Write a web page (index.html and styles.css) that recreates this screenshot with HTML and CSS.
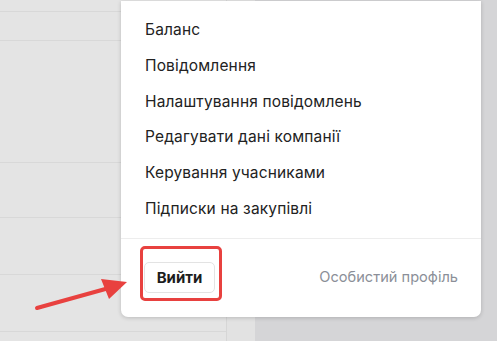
FILE: index.html
```html
<!DOCTYPE html>
<html lang="uk">
<head>
    <meta charset="UTF-8">
    <meta name="viewport" content="width=device-width, initial-scale=1.0">
    <title>Меню профілю</title>
    <link rel="stylesheet" href="styles.css">
</head>
<body>

    <!-- фон сторінки під меню -->
    <div class="page">
        <div class="list">
            <div class="row row-short"></div>
            <div class="row row-mid"></div>
            <div class="row row-tall"></div>
            <div class="row row-mid2"></div>
            <div class="row row-low"></div>
            <div class="row"></div>
        </div>
        <div class="gap"></div>
        <div class="side"></div>
    </div>

    <!-- випадаюче меню -->
    <div class="menu">
        <ul class="menu-list">
            <li>Баланс</li>
            <li>Повідомлення</li>
            <li>Налаштування повідомлень</li>
            <li>Редагувати дані компанії</li>
            <li>Керування учасниками</li>
            <li>Підписки на закупівлі</li>
        </ul>
        <div class="menu-footer">
            <button class="logout">Вийти</button>
            <a class="profile-link">Особистий профіль</a>
        </div>
    </div>

    <!-- позначка -->
    <div class="highlight"></div>
    <svg class="arrow" width="100" height="40" viewBox="0 0 100 40">
        <line x1="4" y1="33" x2="76" y2="13" stroke="#e8413f" stroke-width="4" stroke-linecap="round"/>
        <polygon points="94,7 68,4 76,24" fill="#e8413f"/>
    </svg>

</body>
</html>
```

FILE: styles.css
```css
body {
    margin: 0;
    width: 497px;
    height: 341px;
    overflow: hidden;
    position: relative;
    font-family: Inter, "Noto Sans", sans-serif;
    background: #d5d5d7;
}

/* фон */
.page {
    display: flex;
    height: 341px;
}

.list {
    width: 226px;
    border-right: 1px solid #d6d6d6;
    background: #e4e4e4;
    display: flex;
    flex-direction: column;
}

.row {
    border-bottom: 1px solid #d8d8d8;
    flex: none;
    height: 56px;
}

.row-short { height: 11px; }
.row-mid { height: 28px; }
.row-tall { height: 121px; }
.row-mid2 { height: 54px; }
.row-low { height: 56px; }

.gap {
    width: 28px;
    background: #e2e2e2;
}

.side {
    flex: 1;
    background: #d5d5d7;
}

/* меню */
.menu {
    position: absolute;
    left: 121px;
    top: 1px;
    width: 360px;
    height: 316px;
    background: #fff;
    border-radius: 0 0 7px 7px;
    box-shadow: 0 1px 4px rgba(0, 0, 0, 0.18);
    display: flex;
    flex-direction: column;
}

.menu-list {
    list-style: none;
    margin: 0;
    padding: 11px 0 11px 24px;
    border-bottom: 1px solid #ededed;
}

.menu-list li {
    height: 35.8px;
    line-height: 35.8px;
    font-size: 15.5px;
    letter-spacing: 0.15px;
    color: #222;
}

.menu-footer {
    display: flex;
    align-items: center;
    justify-content: space-between;
    padding: 23px 23px 0 23px;
}

.logout {
    width: 71px;
    height: 31px;
    border: 1px solid #e3e3e3;
    border-radius: 5px;
    background: #fff;
    font-family: inherit;
    font-size: 15px;
    font-weight: 700;
    color: #1d1d1d;
    padding: 0;
}

.profile-link {
    font-size: 14.6px;
    color: #8b8f98;
}

/* червона рамка і стрілка */
.highlight {
    position: absolute;
    left: 140px;
    top: 246px;
    width: 76px;
    height: 49px;
    border: 3px solid #e8413f;
    border-radius: 5px;
}

.arrow {
    position: absolute;
    left: 33px;
    top: 275px;
}
```
